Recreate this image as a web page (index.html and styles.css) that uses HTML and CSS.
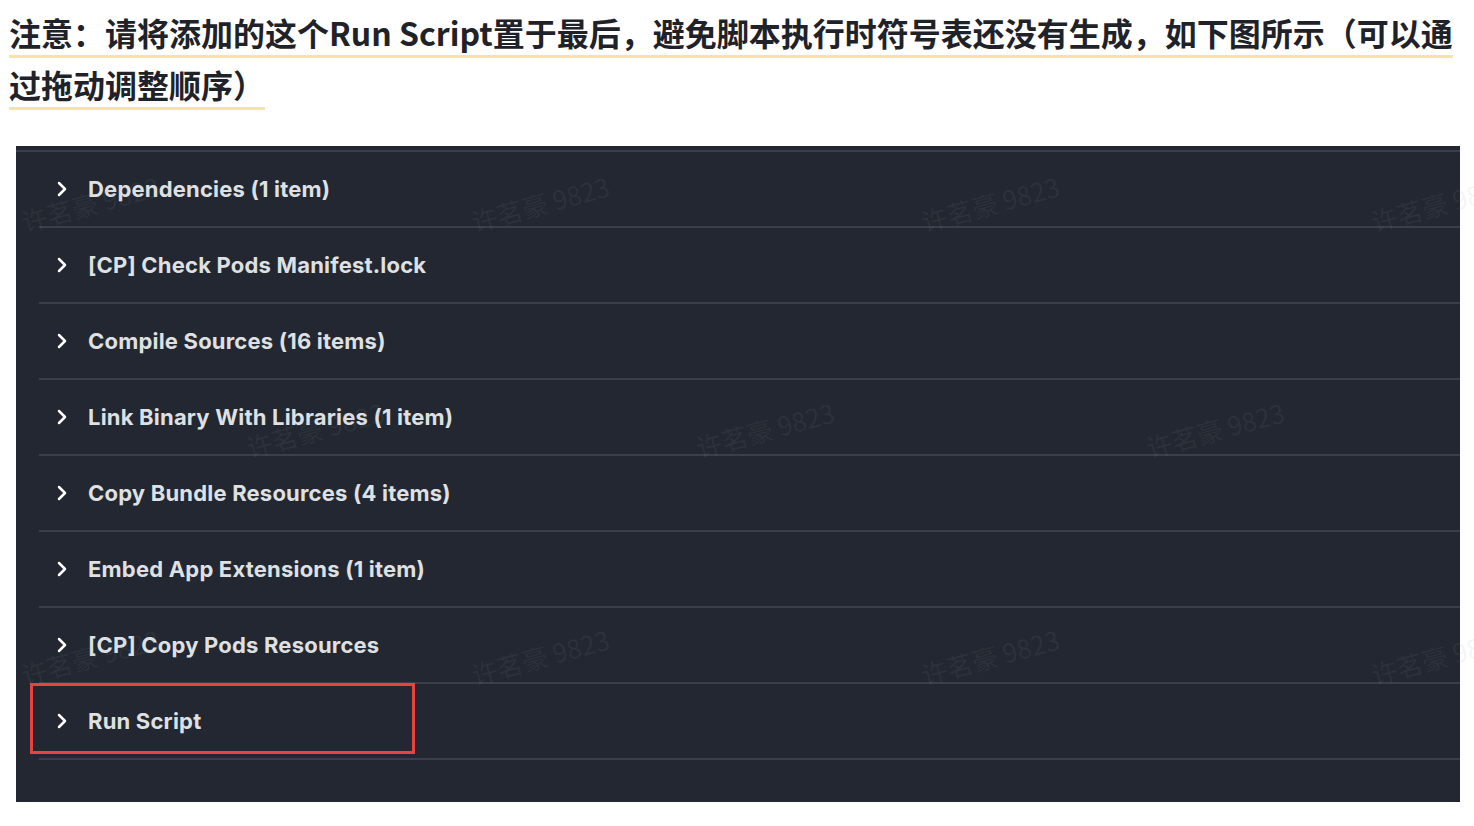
FILE: index.html
```html
<!DOCTYPE html>
<html lang="zh-CN">
<head>
<meta charset="utf-8">
<title>Run Script 顺序</title>
<link rel="stylesheet" href="styles.css">
</head>
<body>
<div class="page">
  <p class="note"><span class="mark">注意：请将添加的这个Run Script置于最后，避免脚本执行时符号表还没有生成，如下图所示（可以通<br>过拖动调整顺序）</span></p>

  <div class="phases">
    <div class="topline"></div>
    <div class="phase">
      <svg class="chev" viewBox="0 0 10 16" width="10" height="16"><path d="M2 2 L8 8 L2 14"/></svg>
      <span class="label">Dependencies (1 item)</span>
    </div>
    <div class="phase">
      <svg class="chev" viewBox="0 0 10 16" width="10" height="16"><path d="M2 2 L8 8 L2 14"/></svg>
      <span class="label">[CP] Check Pods Manifest.lock</span>
    </div>
    <div class="phase">
      <svg class="chev" viewBox="0 0 10 16" width="10" height="16"><path d="M2 2 L8 8 L2 14"/></svg>
      <span class="label">Compile Sources (16 items)</span>
    </div>
    <div class="phase">
      <svg class="chev" viewBox="0 0 10 16" width="10" height="16"><path d="M2 2 L8 8 L2 14"/></svg>
      <span class="label">Link Binary With Libraries (1 item)</span>
    </div>
    <div class="phase">
      <svg class="chev" viewBox="0 0 10 16" width="10" height="16"><path d="M2 2 L8 8 L2 14"/></svg>
      <span class="label">Copy Bundle Resources (4 items)</span>
    </div>
    <div class="phase">
      <svg class="chev" viewBox="0 0 10 16" width="10" height="16"><path d="M2 2 L8 8 L2 14"/></svg>
      <span class="label">Embed App Extensions (1 item)</span>
    </div>
    <div class="phase">
      <svg class="chev" viewBox="0 0 10 16" width="10" height="16"><path d="M2 2 L8 8 L2 14"/></svg>
      <span class="label">[CP] Copy Pods Resources</span>
    </div>
    <div class="phase phase-highlight">
      <svg class="chev" viewBox="0 0 10 16" width="10" height="16"><path d="M2 2 L8 8 L2 14"/></svg>
      <span class="label">Run Script</span>
      <div class="redbox"></div>
    </div>
  </div>

  <div class="watermarks" aria-hidden="true">
    <span class="wm" style="left:90px;top:203px">许茗豪 9823</span>
    <span class="wm" style="left:540px;top:203px">许茗豪 9823</span>
    <span class="wm" style="left:990px;top:203px">许茗豪 9823</span>
    <span class="wm" style="left:1440px;top:203px">许茗豪 9823</span>
    <span class="wm" style="left:315px;top:429px">许茗豪 9823</span>
    <span class="wm" style="left:765px;top:429px">许茗豪 9823</span>
    <span class="wm" style="left:1215px;top:429px">许茗豪 9823</span>
    <span class="wm" style="left:90px;top:656px">许茗豪 9823</span>
    <span class="wm" style="left:540px;top:656px">许茗豪 9823</span>
    <span class="wm" style="left:990px;top:656px">许茗豪 9823</span>
    <span class="wm" style="left:1440px;top:656px">许茗豪 9823</span>
  </div>
</div>
</body>
</html>
```

FILE: styles.css
```css
* { box-sizing: border-box; }

html, body {
  margin: 0;
  padding: 0;
  background: #ffffff;
}

.page {
  position: relative;
  width: 1474px;
  height: 826px;
  overflow: hidden;
}

.note {
  margin: 0;
  padding: 6px 0 0 9px;
  font-family: "Noto Sans CJK SC", "Noto Sans", sans-serif;
  font-size: 32px;
  font-weight: 600;
  line-height: 52px;
  color: #1f2329;
  white-space: nowrap;
}

.mark {
  text-decoration: underline;
  text-decoration-color: #f6e3a6;
  text-decoration-thickness: 3px;
  text-underline-offset: 9px;
  text-decoration-skip-ink: none;
}

.phases {
  margin: 36px 0 0 16px;
  width: 1444px;
  height: 656px;
  padding-top: 4px;
  background: #222731;
}

.topline {
  height: 2px;
  background: #3b3f49;
}

.phase {
  position: relative;
  display: flex;
  align-items: center;
  gap: 21px;
  height: 76px;
  margin-left: 23px;
  padding-left: 18px;
  border-bottom: 2px solid #3b3f49;
}

.chev {
  flex: none;
  fill: none;
  stroke: #ffffff;
  stroke-width: 2.5;
  stroke-linecap: round;
  stroke-linejoin: round;
}

.label {
  font-family: Inter, "Liberation Sans", sans-serif;
  font-size: 22px;
  font-weight: 700;
  letter-spacing: 0.2px;
  color: #dfe0e2;
  white-space: nowrap;
}

.redbox {
  position: absolute;
  left: -9px;
  top: -1px;
  width: 385px;
  height: 71px;
  border: 3px solid #e6443c;
}

.watermarks {
  position: absolute;
  inset: 0;
  pointer-events: none;
}

.wm {
  position: absolute;
  transform: translate(-50%, -50%) rotate(-15deg);
  font-family: "Noto Sans CJK SC", "Noto Sans", sans-serif;
  font-size: 26px;
  font-weight: 400;
  color: rgba(150, 150, 150, 0.1);
  white-space: nowrap;
}
```
